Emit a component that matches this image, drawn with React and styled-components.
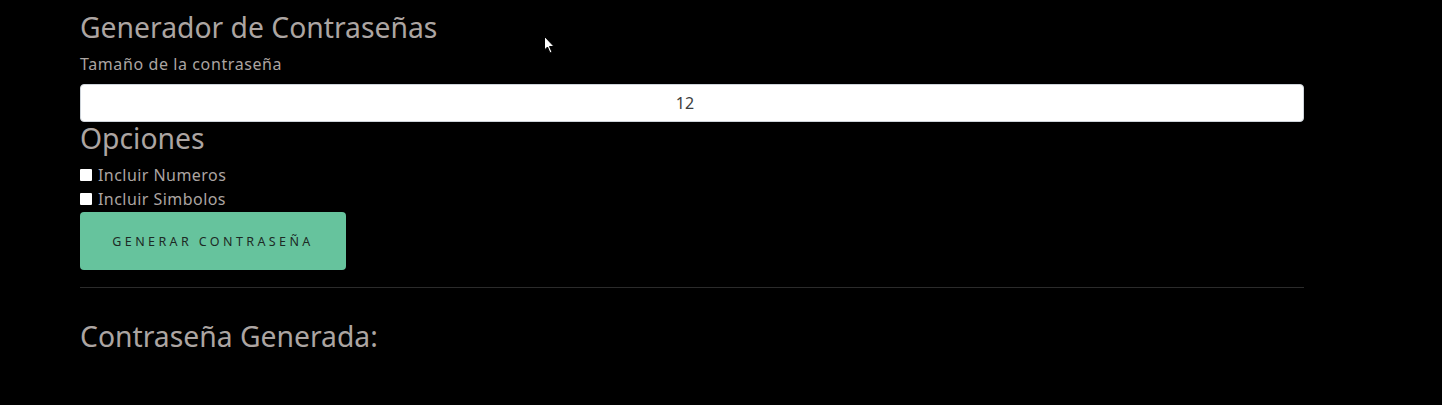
import styled, { createGlobalStyle } from 'styled-components';

const GlobalStyle = createGlobalStyle`
  html, body {
    margin: 0;
    padding: 0;
    background: #000000;
  }
  body {
    font-family: 'Noto Sans', 'Open Sans', sans-serif;
    color: #aca5a2;
  }
`;

const Page = styled.div`
  position: relative;
  width: 1442px;
  height: 405px;
  background: #000000;
  overflow: hidden;
`;

const Container = styled.div`
  width: 1224px;
  padding-left: 80px;
  padding-top: 10px;
`;

const Title = styled.h2`
  margin: 0;
  font-size: 28.3px;
  font-weight: 400;
  line-height: ${p => p.lh || 34}px;
  color: #aca5a2;
  margin-top: ${p => p.top || 0}px;
`;

const Label = styled.label`
  display: block;
  font-size: 16px;
  line-height: 20px;
  margin-top: 10px;
  margin-bottom: 10px;
  letter-spacing: 0.6px;
`;

const NumberInput = styled.input`
  display: block;
  box-sizing: border-box;
  width: 100%;
  height: 38px;
  padding: 0 14px 0 0;
  border: 1px solid #ced4da;
  border-radius: 4px;
  background: #ffffff;
  text-align: center;
  font-family: inherit;
  font-size: 16px;
  color: #3d3d3d;
  outline: none;
`;

const Checks = styled.div`
  margin-top: 9px;
`;

const CheckRow = styled.label`
  display: flex;
  align-items: center;
  gap: 6px;
  font-size: 16px;
  height: 24px;
  letter-spacing: 0.45px;
`;

const Box = styled.span`
  width: 12px;
  height: 12px;
  background: #ffffff;
  border-radius: 1px;
`;

const Button = styled.button`
  margin-top: 1px;
  width: 266px;
  height: 58px;
  border: none;
  border-radius: 4px;
  background: #66c39d;
  color: #1d2a25;
  font-family: inherit;
  font-size: 12.5px;
  letter-spacing: 3.4px;
  text-transform: uppercase;
  cursor: pointer;
`;

const Rule = styled.hr`
  margin: 17px 0 0;
  border: none;
  border-top: 1px solid #2b2b2b;
`;

const Cursor = styled.svg`
  position: absolute;
  left: 544px;
  top: 36px;
`;

const App = () => {
  return (
    <Page>
      <GlobalStyle />
      <Container>
        <Title>Generador de Contraseñas</Title>
        <Label>Tamaño de la contraseña</Label>
        <NumberInput type="text" defaultValue="12" />
        <Title lh={32}>Opciones</Title>
        <Checks>
          <CheckRow>
            <Box />
            Incluir Numeros
          </CheckRow>
          <CheckRow>
            <Box />
            Incluir Simbolos
          </CheckRow>
        </Checks>
        <Button type="button">Generar contraseña</Button>
        <Rule />
        <Title top={31}>Contraseña Generada:</Title>
      </Container>
      <Cursor width="12" height="19" viewBox="0 0 12 19">
        <path
          d="M0.5 0.5 L0.5 14 L3.5 11 L6 17 L8 16 L5.5 10.5 L10 10.5 Z"
          fill="#ffffff"
          stroke="#000000"
          strokeWidth="1"
        />
      </Cursor>
    </Page>
  );
};

export default App;
